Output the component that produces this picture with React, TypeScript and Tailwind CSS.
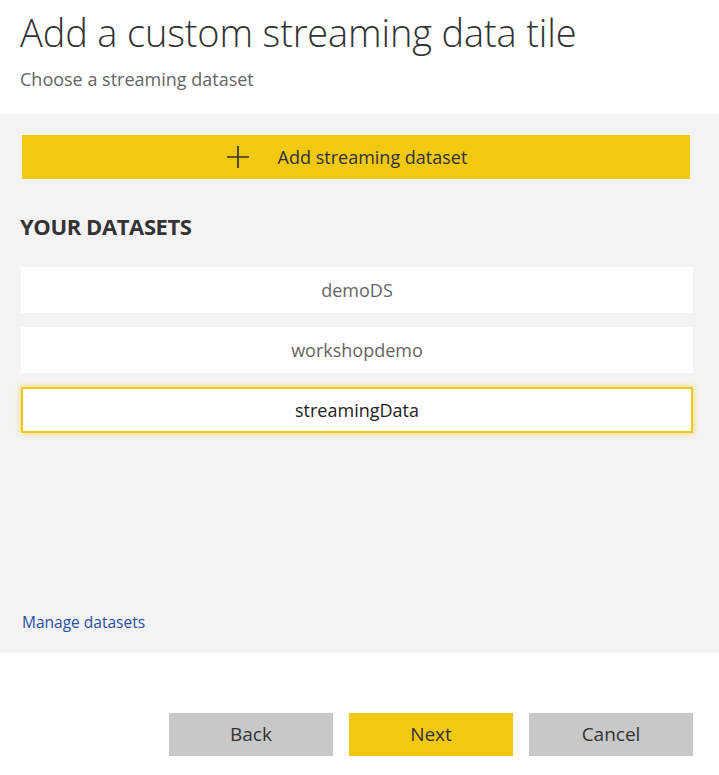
import React, { useState } from 'react';

const datasets = ['demoDS', 'workshopdemo', 'streamingData'];

const PlusIcon = () => (
  <svg width="22" height="22" viewBox="0 0 22 22" className="shrink-0">
    <path d="M11 0v22M0 11h22" stroke="#333" strokeWidth="1.7" fill="none" />
  </svg>
);

const App: React.FC = () => {
  const [selected, setSelected] = useState('streamingData');

  return (
    <div className="w-[719px] h-[775px] bg-white text-[#333] font-['Open_Sans',sans-serif] overflow-hidden">
      <div className="px-5 pt-[7px] h-[114px]">
        <h1 className="text-[38px] font-light leading-[50px] tracking-[-0.15px]">Add a custom streaming data tile</h1>
        <p className="mt-[10px] text-[18px] leading-6 text-[#666]">Choose a streaming dataset</p>
      </div>

      <div className="bg-[#f3f3f3] h-[539px] pl-[21px] pr-[26px] pt-[21px] flex flex-col">
        <button className="ml-px w-[668px] h-[44px] bg-[#f2c811] flex items-center justify-center gap-[29px] text-[18px] text-[#333] pr-[18px]">
          <PlusIcon />
          <span>Add streaming dataset</span>
        </button>

        <h2 className="mt-[31px] -ml-px text-[22px] font-bold leading-8 tracking-[-0.4px]">YOUR DATASETS</h2>

        <div className="mt-[25px] flex flex-col gap-[14px]">
          {datasets.map((d) => (
            <button
              key={d}
              onClick={() => setSelected(d)}
              className={`w-[672px] h-[46px] bg-white flex items-center justify-center text-[18px] ${
                selected === d
                  ? 'border-2 border-[#f2c811] text-[#222] shadow-[0_0_6px_rgba(242,200,17,0.7)]'
                  : 'text-[#666]'
              }`}
            >
              {d}
            </button>
          ))}
        </div>

        <a href="#" className="mt-auto mb-[19px] ml-px text-[15.5px] text-[#2a4fa6]">Manage datasets</a>
      </div>

      <div className="flex justify-end gap-4 pr-[26px] pt-[60px]">
        <button className="w-[164px] h-[43px] bg-[#c8c8c8] text-[19px] text-[#333]">Back</button>
        <button className="w-[164px] h-[43px] bg-[#f2c811] text-[19px] text-[#333]">Next</button>
        <button className="w-[164px] h-[43px] bg-[#c8c8c8] text-[19px] text-[#333]">Cancel</button>
      </div>
    </div>
  );
};

export default App;
